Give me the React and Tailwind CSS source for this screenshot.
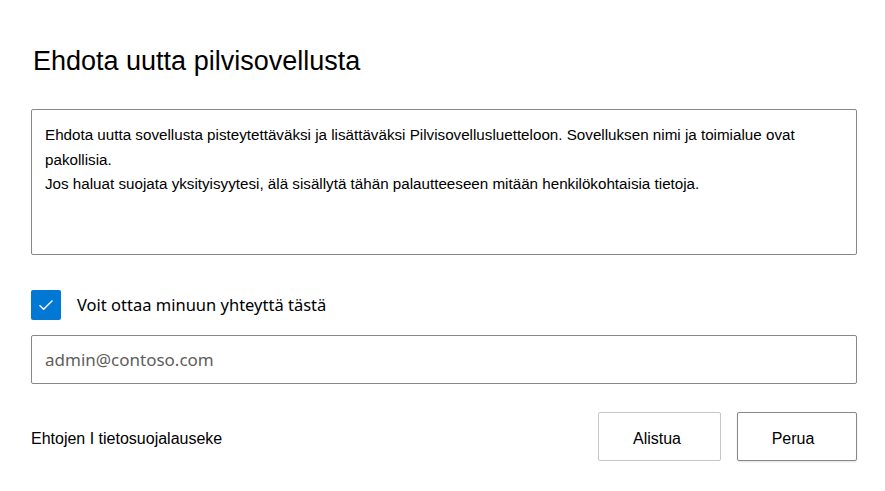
import React, { useState } from "react";

const arial = { fontFamily: '"Liberation Sans", Arial, sans-serif' };

const App = () => {
  const [checked, setChecked] = useState(true);

  return (
    <div className="w-[885px] h-[491px] bg-white font-['Liberation_Sans',Arial,sans-serif] text-[#1b1b1b]">
      <div className="pl-[31px] pr-[28px] pt-[44px]">
        <h1 className="pl-[2px] text-[27px] leading-[34px] text-black">
          Ehdota uutta pilvisovellusta
        </h1>

        <div className="mt-[31px] h-[146px] rounded-[2px] border border-[#8a8886] pl-[13px] pr-3 pt-[13px] text-[15.2px] leading-[24.5px] text-black">
          <div className="whitespace-nowrap">
            Ehdota uutta sovellusta pisteytettäväksi ja lisättäväksi Pilvisovellusluetteloon. Sovelluksen nimi ja toimialue ovat
          </div>
          <div>pakollisia.</div>
          <div className="whitespace-nowrap">
            Jos haluat suojata yksityisyytesi, älä sisällytä tähän palautteeseen mitään henkilökohtaisia tietoja.
          </div>
        </div>

        <label className="mt-[35px] flex items-center gap-4 cursor-pointer">
          <button
            type="button"
            onClick={() => setChecked(!checked)}
            className={`flex h-[30px] w-[30px] items-center justify-center rounded-[2px] ${
              checked ? "bg-[#0078d4]" : "border border-[#323130] bg-white"
            }`}
          >
            {checked && (
              <svg width="16" height="12" viewBox="0 0 16 12" fill="none">
                <path d="M1.5 6.2 L5.6 10.2 L14.5 1.5" stroke="white" strokeWidth="1.4" />
              </svg>
            )}
          </button>
          <span className="font-['Noto_Sans',sans-serif] text-[16.5px] text-black">
            Voit ottaa minuun yhteyttä tästä
          </span>
        </label>

        <input
          type="text"
          placeholder="admin@contoso.com"
          className="mt-[15px] block h-[49px] w-full rounded-[2px] border border-[#8a8886] px-[13px] font-['Noto_Sans',sans-serif] text-[17px] text-[#323130] placeholder:text-[#605e5c] outline-none"
        />

        <div className="mt-[28px] flex items-center justify-between">
          <span className="pt-[5px] text-[16px] text-black" style={arial}>
            Ehtojen I tietosuojalauseke
          </span>
          <div className="flex gap-4">
            <button className="h-[49px] w-[123px] rounded-[2px] border border-[#c8c6c4] bg-white pt-[5px] pr-[5px] text-[16px] text-black">
              Alistua
            </button>
            <button className="h-[49px] w-[120px] rounded-[2px] border border-[#8a8886] bg-white pt-[5px] pr-[8px] text-[16px] text-black shadow-[0_1px_2px_rgba(0,0,0,0.12)]">
              Perua
            </button>
          </div>
        </div>
      </div>
    </div>
  );
};

export default App;
